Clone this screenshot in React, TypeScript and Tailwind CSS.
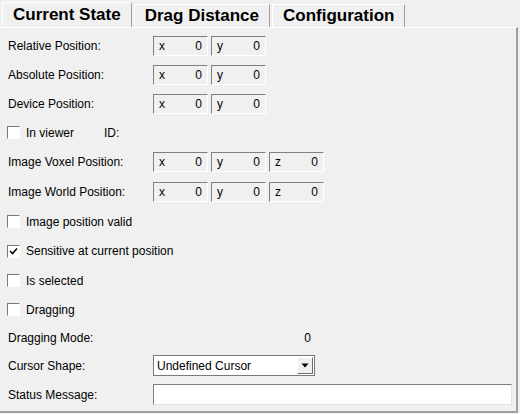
import React from 'react';

const font = { fontFamily: '"Liberation Sans", Arial, sans-serif' };

// sunken value box: "x      0"
function ValueBox({ axis, value }: { axis: string; value: string }) {
  return (
    <div className="flex h-[20px] w-[55px] items-center justify-between border-t border-l border-t-[#808080] border-l-[#808080] border-b border-r border-b-white border-r-white px-[5px] text-[12px] text-black">
      <span>{axis}</span>
      <span>{value}</span>
    </div>
  );
}

function CheckBox({ checked }: { checked?: boolean }) {
  return (
    <div className="flex h-[13px] w-[13px] items-center justify-center border-t border-l border-t-[#7a7a7a] border-l-[#7a7a7a] border-b border-r border-b-white border-r-white bg-white">
      {checked && (
        <svg width="9" height="9" viewBox="0 0 9 9">
          <path d="M1 4 L3.5 6.5 L8 1.5" fill="none" stroke="#000" strokeWidth="1.6" />
        </svg>
      )}
    </div>
  );
}

function Row({ h, children }: { h: string; children: React.ReactNode }) {
  return <div className={`flex items-center ${h}`}>{children}</div>;
}

function Label({ text }: { text: string }) {
  return <div className="w-[153px] pl-[8px] text-[12px] text-black">{text}</div>;
}

function CheckRow({ text, checked }: { text: string; checked?: boolean }) {
  return (
    <div className="flex items-center gap-[6px] pl-[7px] text-[12px] text-black">
      <CheckBox checked={checked} />
      <span>{text}</span>
    </div>
  );
}

export default function App() {
  return (
    <div className="h-[414px] w-[520px] overflow-hidden bg-[#f0f0f0]" style={font}>
      {/* tab bar */}
      <div className="flex h-[27px] items-end pl-[2px]">
        <div className="flex h-[25px] items-center border-t border-l border-t-white border-l-white border-r border-r-[#a0a0a0] px-[10px] text-[17px] font-bold text-black">
          Current State
        </div>
        <div className="ml-[2px] flex h-[23px] items-center border-t border-l border-t-white border-l-white border-r border-r-[#a0a0a0] px-[10px] text-[17px] font-bold text-black">
          Drag Distance
        </div>
        <div className="ml-[2px] flex h-[23px] items-center border-t border-l border-t-white border-l-white border-r border-r-[#a0a0a0] px-[10px] text-[17px] font-bold text-black">
          Configuration
        </div>
      </div>

      {/* panel */}
      <div className="h-[386px] w-[518px] border-t border-t-white border-r-2 border-r-[#a0a0a0] border-b-2 border-b-[#a0a0a0] pt-[3px]">
        <Row h="h-[29px]">
          <Label text="Relative Position:" />
          <div className="flex gap-[3px]">
            <ValueBox axis="x" value="0" />
            <ValueBox axis="y" value="0" />
          </div>
        </Row>
        <Row h="h-[29px]">
          <Label text="Absolute Position:" />
          <div className="flex gap-[3px]">
            <ValueBox axis="x" value="0" />
            <ValueBox axis="y" value="0" />
          </div>
        </Row>
        <Row h="h-[29px]">
          <Label text="Device Position:" />
          <div className="flex gap-[3px]">
            <ValueBox axis="x" value="0" />
            <ValueBox axis="y" value="0" />
          </div>
        </Row>
        <Row h="h-[29px]">
          <CheckRow text="In viewer" />
          <span className="ml-[30px] text-[12px] text-black">ID:</span>
        </Row>
        <Row h="h-[30px]">
          <Label text="Image Voxel Position:" />
          <div className="flex gap-[3px]">
            <ValueBox axis="x" value="0" />
            <ValueBox axis="y" value="0" />
            <ValueBox axis="z" value="0" />
          </div>
        </Row>
        <Row h="h-[30px]">
          <Label text="Image World Position:" />
          <div className="flex gap-[3px]">
            <ValueBox axis="x" value="0" />
            <ValueBox axis="y" value="0" />
            <ValueBox axis="z" value="0" />
          </div>
        </Row>
        <Row h="h-[29px]">
          <CheckRow text="Image position valid" />
        </Row>
        <Row h="h-[30px]">
          <CheckRow text="Sensitive at current position" checked />
        </Row>
        <Row h="h-[29px]">
          <CheckRow text="Is selected" />
        </Row>
        <Row h="h-[29px]">
          <CheckRow text="Dragging" />
        </Row>
        <Row h="h-[27px]">
          <Label text="Dragging Mode:" />
          <div className="w-[162px] pr-[4px] text-right text-[12px] text-black">0</div>
        </Row>
        <Row h="h-[29px]">
          <Label text="Cursor Shape:" />
          <div className="flex h-[21px] w-[162px] items-center justify-between border border-[#7a7a7a] bg-white pl-[3px] pr-[1px] text-[12px] text-black">
            <span>Undefined Cursor</span>
            <div className="flex h-[17px] w-[16px] items-center justify-center border-t border-l border-t-white border-l-white border-b border-r border-b-[#6d6d6d] border-r-[#6d6d6d] bg-[#f0f0f0]">
              <svg width="8" height="5" viewBox="0 0 8 5">
                <path d="M0.5 0.5 L7.5 0.5 L4 4.5 Z" fill="#000" />
              </svg>
            </div>
          </div>
        </Row>
        <Row h="h-[29px]">
          <Label text="Status Message:" />
          <div className="h-[21px] w-[359px] border-t border-l border-t-[#808080] border-l-[#808080] border-b border-r border-b-[#e3e3e3] border-r-[#e3e3e3] bg-white" />
        </Row>
      </div>
    </div>
  );
}
